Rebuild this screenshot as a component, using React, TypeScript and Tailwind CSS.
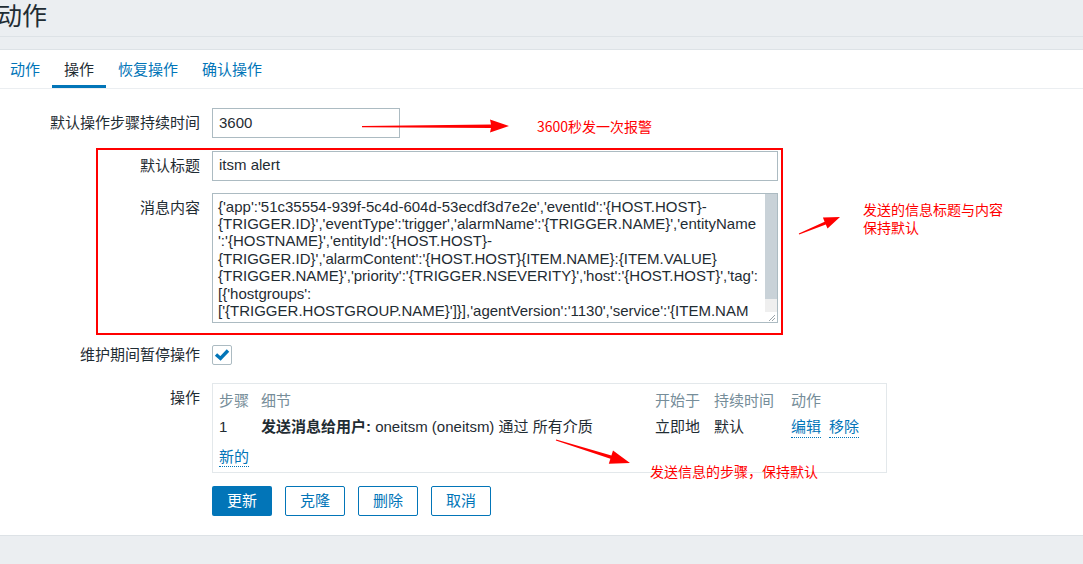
import React from "react";

const lines = [
  "{'app':'51c35554-939f-5c4d-604d-53ecdf3d7e2e','eventId':'{HOST.HOST}-",
  "{TRIGGER.ID}','eventType':'trigger','alarmName':'{TRIGGER.NAME}','entityName",
  "':'{HOSTNAME}','entityId':'{HOST.HOST}-",
  "{TRIGGER.ID}','alarmContent':'{HOST.HOST}{ITEM.NAME}:{ITEM.VALUE}",
  "{TRIGGER.NAME}','priority':'{TRIGGER.NSEVERITY}','host':'{HOST.HOST}','tag':",
  "[{'hostgroups':",
  "['{TRIGGER.HOSTGROUP.NAME}']}],'agentVersion':'1130','service':'{ITEM.NAM",
  "E}','ip':'{HOST.IP}','itemName':'{ITEM.NAME}','itemValue':'{ITEM.VALUE}'}",
];

function Label({ children, className = "" }: { children: React.ReactNode; className?: string }) {
  return (
    <div className={"w-[200px] shrink-0 text-right leading-[30px] text-[#1f2c33] " + className}>
      {children}
    </div>
  );
}

export default function App() {
  return (
    <div className="relative w-[1083px] h-[564px] overflow-hidden bg-[#ebeef1] font-['Liberation_Sans','Noto_Sans_CJK_SC',sans-serif] text-[15px] text-[#1f2c33] flex flex-col">
      {/* header */}
      <div className="h-[37px] shrink-0 border-b border-[#dde2e6] flex items-start">
        <h1 className="ml-[-3px] mt-[1px] text-[25px] leading-[30px] font-normal text-[#1f2c33]">动作</h1>
      </div>
      <div className="h-[12px] shrink-0" />
      {/* content */}
      <div className="bg-white border-t border-[#dde2e6] shrink-0">
        {/* tabs */}
        <div className="flex h-[39px] border-b border-[#ebeef1] ml-[-2px]">
          <div className="h-[38px] px-3 pt-[5px] flex items-center border-b-[3px] border-transparent text-[#0275b8]">动作</div>
          <div className="h-[38px] px-3 pt-[5px] flex items-center border-b-[3px] border-[#0275b8] text-[#1f2c33]">操作</div>
          <div className="h-[38px] px-3 pt-[5px] flex items-center border-b-[3px] border-transparent text-[#0275b8]">恢复操作</div>
          <div className="h-[38px] px-3 pt-[5px] flex items-center border-b-[3px] border-transparent text-[#0275b8]">确认操作</div>
        </div>

        {/* form */}
        <div className="pt-[19px] pb-[19px]">
          <div className="flex">
            <Label>默认操作步骤持续时间</Label>
            <div className="ml-3 w-[188px] h-[30px] border border-[#acbbc2] px-[6px] flex items-center">3600</div>
          </div>

          <div className="flex mt-[12.5px]">
            <Label>默认标题</Label>
            <div className="ml-3 w-[566px] h-[30px] border border-[#acbbc2] px-[6px] flex items-center">itsm alert</div>
          </div>

          <div className="flex mt-[12px]">
            <Label className="leading-[28px]">消息内容</Label>
            <div className="ml-3 w-[566px] h-[130px] border border-[#acbbc2] relative overflow-hidden">
              <div className="pl-[5px] pt-[4px] text-[15px] leading-[17.4px] whitespace-pre text-[#1f2c33]">
                {lines.map((l, i) => (
                  <div key={i}>{l}</div>
                ))}
              </div>
              <div className="absolute right-0 top-0 bottom-0 w-[12px] bg-white flex flex-col">
                <div className="h-[105px] bg-[#c9d2d8]" />
                <div className="h-[13px] bg-[#efefef]" />
                <div className="flex-1 bg-white relative">
                  <svg width="12" height="11" viewBox="0 0 12 11" className="absolute right-0 bottom-0">
                    <line x1="4" y1="10" x2="10" y2="4" stroke="#9aa4a9" strokeWidth="1" />
                    <line x1="7" y1="10" x2="10" y2="7" stroke="#9aa4a9" strokeWidth="1" />
                  </svg>
                </div>
              </div>
            </div>
          </div>

          <div className="flex items-center mt-[22.5px] h-[20px]">
            <Label className="leading-[20px]">维护期间暂停操作</Label>
            <div className="ml-3 w-[20px] h-[20px] border border-[#acbbc2] rounded-[2px] flex items-center justify-center bg-white">
              <svg width="18" height="18" viewBox="0 0 18 18">
                <path d="M3 8.5 L7.5 12.5 L15 4.5" fill="none" stroke="#0275b8" strokeWidth="3.4" strokeLinejoin="miter" />
              </svg>
            </div>
          </div>

          <div className="flex mt-[18px]">
            <Label>操作</Label>
            <div className="ml-3 w-[675px] h-[90px] border border-[#e3e8eb] pt-[8px] pl-[6px]">
              <div className="grid grid-cols-[42px_394px_59px_77px_1fr] leading-[18px] text-[#768d99]">
                <div>步骤</div>
                <div>细节</div>
                <div>开始于</div>
                <div>持续时间</div>
                <div>动作</div>
              </div>
              <div className="grid grid-cols-[42px_394px_59px_77px_1fr] leading-[18px] mt-[8px]">
                <div>1</div>
                <div className="whitespace-nowrap">
                  <span className="font-bold">发送消息给用户:</span> oneitsm (oneitsm) 通过 所有介质
                </div>
                <div>立即地</div>
                <div>默认</div>
                <div className="flex gap-[8px]">
                  <span className="text-[#0275b8] border-b border-dotted border-[#0275b8] pb-[1px]">编辑</span>
                  <span className="text-[#0275b8] border-b border-dotted border-[#0275b8] pb-[1px]">移除</span>
                </div>
              </div>
              <div className="mt-[10px] leading-[18px]">
                <span className="text-[#0275b8] border-b border-dotted border-[#0275b8] pb-[1px]">新的</span>
              </div>
            </div>
          </div>

          <div className="flex ml-[212px] mt-[13px] gap-[13px]">
            <div className="w-[60px] h-[30px] rounded-[2px] bg-[#0275b8] text-white flex items-center justify-center">更新</div>
            <div className="w-[60px] h-[30px] rounded-[2px] border border-[#0275b8] text-[#0275b8] bg-white flex items-center justify-center">克隆</div>
            <div className="w-[60px] h-[30px] rounded-[2px] border border-[#0275b8] text-[#0275b8] bg-white flex items-center justify-center">删除</div>
            <div className="w-[60px] h-[30px] rounded-[2px] border border-[#0275b8] text-[#0275b8] bg-white flex items-center justify-center">取消</div>
          </div>
        </div>
      </div>
      {/* footer */}
      <div className="flex-1 border-t border-[#dde2e6] bg-[#ebeef1]" />

      {/* annotations */}
      <div className="absolute left-[96px] top-[148px] w-[687px] h-[187px] border-2 border-[#ff0000] pointer-events-none" />
      <svg className="absolute left-0 top-0 pointer-events-none" width="1083" height="564" viewBox="0 0 1083 564">
        <polygon points="362,126 491,124.6 490,119.5 509,126 490,132.5 491,128 362,127.2" fill="#ff0000" />
        <polygon points="798.8,233.5 824.6,221.7 822.9,217.6 840,217 827.5,228.6 825.8,224.5 799.2,234.5" fill="#ff0000" />
        <polygon points="556.2,439.4 611.4,455.5 613,450.4 630,463 608.8,463.8 610.4,458.7 555.8,440.6" fill="#ff0000" />
      </svg>
      <div className="absolute left-[537px] top-[116px] text-[14px] leading-[20px] text-[#ff0000] font-['Noto_Sans_CJK_SC',sans-serif] whitespace-nowrap">3600秒发一次报警</div>
      <div className="absolute left-[863px] top-[200px] text-[14px] leading-[18px] text-[#ff0000] font-['Noto_Sans_CJK_SC',sans-serif] whitespace-nowrap">
        <div>发送的信息标题与内容</div>
        <div>保持默认</div>
      </div>
      <div className="absolute left-[650px] top-[461px] text-[14px] leading-[20px] text-[#ff0000] font-['Noto_Sans_CJK_SC',sans-serif] whitespace-nowrap">发送信息的步骤，保持默认</div>
    </div>
  );
}
